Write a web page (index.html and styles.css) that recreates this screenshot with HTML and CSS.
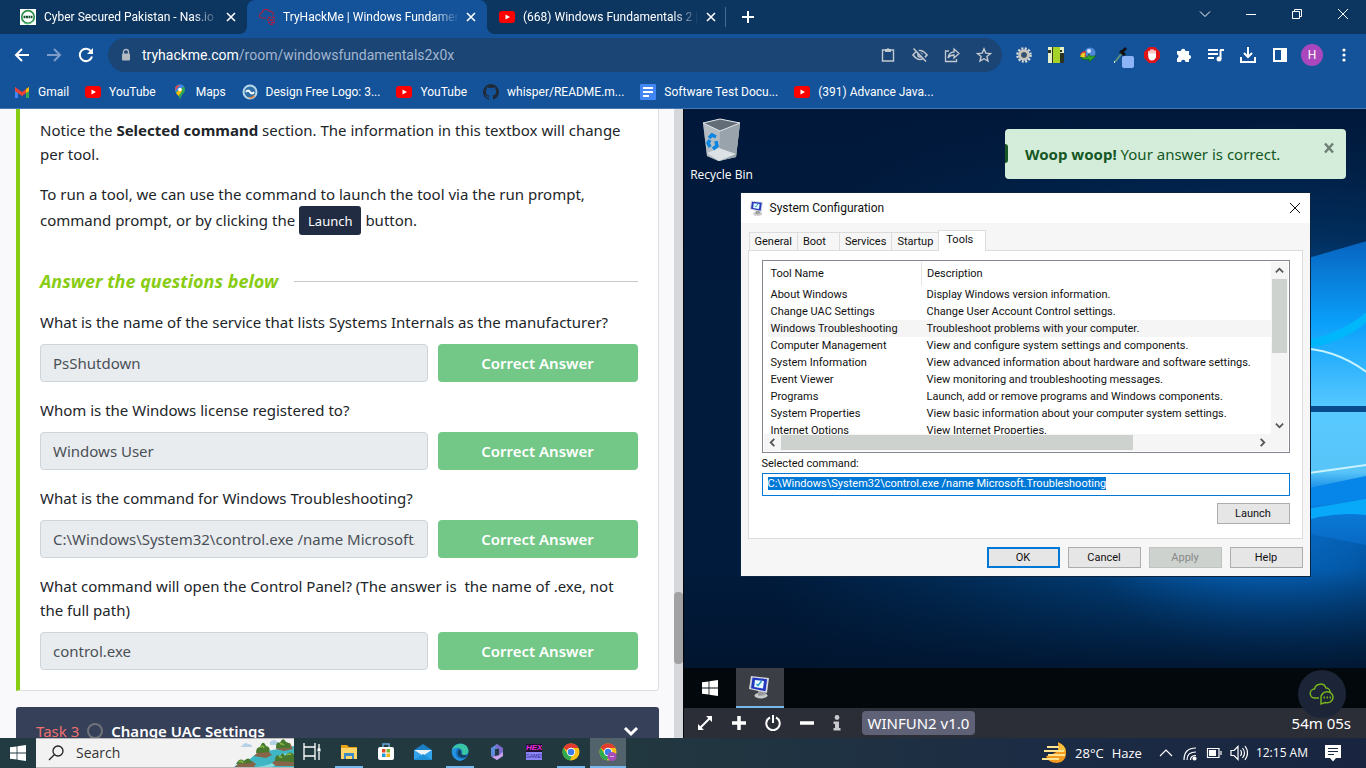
FILE: index.html
```html
<!DOCTYPE html>
<html lang="en">
<head>
<meta charset="utf-8">
<title>TryHackMe | Windows Fundamentals 2</title>
<link rel="stylesheet" href="styles.css">
</head>
<body>
<svg class="defs" aria-hidden="true">
  <symbol id="youtube" viewBox="0 0 16 16"><rect y="2" width="16" height="12" rx="3" fill="#f00"/><path d="M6.5 5.4v5.2L11 8z" fill="#fff"/></symbol>
  <symbol id="close" viewBox="0 0 16 16"><path d="M4 4l8 8M12 4l-8 8" stroke="currentColor" stroke-width="1.6" fill="none"/></symbol>
  <symbol id="windows" viewBox="0 0 16 16"><path d="M0 2.3l6.6-.9v6.2H0zM7.4 1.3L16 0v7.6H7.4zM0 8.4h6.6v6.2L0 13.7zM7.4 8.4H16V16l-8.6-1.3z" fill="#fff"/></symbol>
  <symbol id="msconfig" viewBox="0 0 24 24"><ellipse cx="13" cy="20.5" rx="6.500" ry="3" fill="#c9c9c9"/><path d="M10 15l6 1 1 4-7 1z" fill="#999"/><path d="M3 1l18 2-2 15L1 14z" fill="#d7d7df"/><path d="M4.500 2.500l14.600 1.700-1.600 12L3 13.200z" fill="#2239bd"/><path d="M7 5l9 1-1 7.500-8.800-1.600z" fill="#e8fbff"/><path d="M8.500 9l1.600 1.500L13.500 6" stroke="#1b93c9" stroke-width="1.400" fill="none"/></symbol>
  <symbol id="chrome" viewBox="0 0 18 18"><circle cx="9" cy="9" r="8.500" fill="#fbc116"/><path d="M1.600 4.800A8.500 8.500 0 0 1 16.400 4.900H9a4 4 0 0 0-3.700 2.600z" fill="#e33b2e"/><path d="M1.600 4.800L5.500 11a4 4 0 0 0 4.400 2L7.800 17.400A8.500 8.500 0 0 1 1.600 4.800z" fill="#2da94f"/><circle cx="9" cy="9" r="4.200" fill="#fff"/><circle cx="9" cy="9" r="3.300" fill="#3b7de9"/></symbol>
</svg>

<header class="browser">
  <div class="tabstrip">
    <div class="tab">
      <svg class="ic16" viewBox="0 0 16 16"><rect width="16" height="16" fill="#fff"/><circle cx="8" cy="8" r="6.300" fill="none" stroke="#2f8f4a" stroke-width="1.700"/><path d="M3.500 8h9" stroke="#15512d" stroke-width="2.500" stroke-dasharray="2 .5"/><path d="M4 14a7 7 0 0 0 9-2" stroke="#69c27f" fill="none"/></svg>
      <span class="tab-title">Cyber Secured Pakistan - Nas.io Member</span>
      <button class="tab-close" aria-label="Close tab"><svg class="ic16"><use href="#close"/></svg></button>
    </div>
    <div class="tab active">
      <svg class="ic16" viewBox="0 0 16 16" fill="none" stroke="#a92142" stroke-width="1.100"><path d="M7 9H3a2.400 2.400 0 0 1 0-5 4 4 0 0 1 7.500-1.500A3 3 0 0 1 14 6.500"/><path d="M9 8.500h3M13 8.500h3M8 11h2M11 11h3M15 11h1M9 13.500h2M12 13.500h4M11 15.500h3" stroke-width="1.400"/></svg>
      <span class="tab-title">TryHackMe | Windows Fundamentals 2</span>
      <button class="tab-close" aria-label="Close tab"><svg class="ic16"><use href="#close"/></svg></button>
    </div>
    <div class="tab last">
      <svg class="ic16"><use href="#youtube"/></svg>
      <span class="tab-title">(668) Windows Fundamentals 2 | TryHackMe</span>
      <button class="tab-close" aria-label="Close tab"><svg class="ic16"><use href="#close"/></svg></button>
    </div>
    <button class="new-tab" aria-label="New tab"><svg class="ic16" viewBox="0 0 16 16"><path d="M8 2v12M2 8h12" stroke="#fff" stroke-width="2"/></svg></button>
    <div class="win-controls">
      <button aria-label="Search tabs"><svg class="ic12" viewBox="0 0 12 12"><path d="M1 3.500l5 5 5-5"/></svg></button>
      <button aria-label="Minimize"><svg class="ic12" viewBox="0 0 12 12"><path d="M1 6.500h10"/></svg></button>
      <button aria-label="Restore"><svg class="ic12" viewBox="0 0 12 12"><path d="M1.500 3.500h7v7h-7zM3.500 3.500v-2h7v7h-2"/></svg></button>
      <button aria-label="Close"><svg class="ic12" viewBox="0 0 12 12"><path d="M1 1l10 10M11 1L1 11"/></svg></button>
    </div>
  </div>

  <div class="toolbar">
    <button class="tool" aria-label="Back"><svg class="ic16" viewBox="0 0 16 16"><path d="M15 8H2M8 2L2 8l6 6" fill="none" stroke="#fff" stroke-width="2"/></svg></button>
    <button class="tool" aria-label="Forward"><svg class="ic16" viewBox="0 0 16 16"><path d="M1 8h13M8 2l6 6-6 6" fill="none" stroke="#7d9cc9" stroke-width="2"/></svg></button>
    <button class="tool" aria-label="Reload"><svg class="ic16" viewBox="0 0 16 16"><path d="M13.200 4.500A6.200 6.200 0 1 0 14 9.500" fill="none" stroke="#fff" stroke-width="2"/><path d="M15 1v6H9z" fill="#fff"/></svg></button>
    <div class="omnibox">
      <svg class="lock" viewBox="0 0 10 14"><path d="M2.500 6V4a2.500 2.500 0 0 1 5 0v2" fill="none" stroke="#b5b9c2" stroke-width="1.400"/><rect x="1" y="5.500" width="8" height="7" rx="1" fill="#b5b9c2"/></svg>
      <span class="url"><b>tryhackme.com</b>/room/windowsfundamentals2x0x</span>
      <button class="tool" aria-label="Clipboard"><svg class="ic16" viewBox="0 0 16 16"><path d="M2.500 3h11v11h-11z" fill="none" stroke="#c4c8cf" stroke-width="1.400"/><path d="M5 2h2l1-1.500L9 2h2v3H5z" fill="#c4c8cf"/></svg></button>
      <button class="tool" aria-label="Tracking blocked"><svg class="ic16" viewBox="0 0 16 16" fill="none" stroke="#c4c8cf"><path d="M1 8q7-9 14 0-7 9-14 0z" stroke-width="1.600"/><circle cx="8" cy="8" r="2" stroke-width="1.600"/><path d="M3 1l12 13" stroke="#1a4577" stroke-width="2"/><path d="M1.500 1.500l12.500 13" stroke-width="1.500"/></svg></button>
      <button class="tool" aria-label="Share"><svg class="ic16" viewBox="0 0 16 16" fill="none" stroke="#c4c8cf" stroke-width="1.300"><path d="M5 4H1.500v10.500h11V12"/><path d="M4 11q1-6 6-6V2l5 4.500-5 4.500V8Q6 8 4 11z"/></svg></button>
      <button class="tool" aria-label="Bookmark"><svg class="ic16" viewBox="0 0 16 16"><path d="M8 1.800l1.800 4.300 4.700.4-3.600 3 1.100 4.600L8 11.700l-4 2.400 1.100-4.600-3.600-3 4.700-.4z" fill="none" stroke="#c4c8cf" stroke-width="1.400"/></svg></button>
    </div>
    <button class="tool" aria-label="Settings extension"><svg class="ic16" viewBox="0 0 16 16"><circle cx="8" cy="8" r="6.500" fill="none" stroke="#d8d8d4" stroke-width="2.600" stroke-dasharray="2 1.400"/><circle cx="8" cy="8" r="4.300" fill="#26527f" stroke="#c4c4c1" stroke-width="3"/><circle cx="8" cy="8" r="2.400" fill="none" stroke="#555"/></svg></button>
    <button class="tool" aria-label="Door extension"><svg class="ic16" viewBox="0 0 16 16"><path fill="#e4efc8" d="M0 0h16v16H0z"/><path fill="#a5d328" d="M5 0h7v16H5z"/><path fill="#2d3322" d="M0 3h3v3H0zM12 3h2v2h-2zM12 6h4v10h-4zM4 0h1v16H4z"/></svg></button>
    <button class="tool" aria-label="Download manager"><svg class="ic16" viewBox="0 0 16 16"><circle cx="10" cy="6" r="5.500" fill="#4e88d6"/><circle cx="9" cy="4" r="2" fill="#d5e6ff"/><path d="M0 8q1-4 6-4-1 4 1 6z" fill="#d53f2f"/><path d="M0 10q2-5 5-4-1 3 1 5z" fill="#e6d324"/><path d="M0 10q7 3 9-3v2h7l-7 6v-3q-6 2-9-2z" fill="#30a627" stroke="#0b5714" stroke-width=".5"/></svg></button>
    <button class="tool" aria-label="Colour picker"><svg class="picker" viewBox="0 0 22 22"><path d="M3 16L10 7" stroke="#5b927c" stroke-width="2"/><path d="M8 5l5 4M10 6l4-4" stroke="#111" stroke-width="3"/><path d="M2.500 17v-2" stroke="#dcefe5"/><rect x="10" y="10" width="12" height="12" rx="2" fill="#8eb4f8"/></svg></button>
    <button class="tool" aria-label="Ad blocker"><svg class="ic16" viewBox="0 0 16 16"><path d="M5 0h6l5 5v6l-5 5H5l-5-5V5z" fill="#e01317"/><path d="M5 8V4.500M7 7V3M9 7V3M11 8V4" stroke="#fff" stroke-width="1.500" stroke-linecap="round"/><path d="M4.300 6.500H12v4Q10.500 13.500 8 13.500 5 13.500 4.300 10z" fill="#fff"/></svg></button>
    <button class="tool" aria-label="Extensions"><svg class="ic16" viewBox="0 0 16 16"><path d="M1 4h4a2.200 2.200 0 1 1 4.400 0H13v4a2.100 2.100 0 1 1 0 4.200V15H9.500a2.200 2.200 0 0 0-4.400 0H1v-3.600a2.200 2.200 0 0 0 0-4.200z" fill="#fff"/></svg></button>
    <button class="tool" aria-label="Media"><svg class="ic16" viewBox="0 0 16 16"><path d="M0 3h10M0 7h10M0 11h6M12.500 3v9M12 3h4" stroke="#fff" stroke-width="2"/><circle cx="11" cy="12" r="2.500" fill="#fff"/></svg></button>
    <button class="tool" aria-label="Downloads"><svg class="ic16" viewBox="0 0 16 16"><path d="M8 0v9M4 6l4 4 4-4M1 10v5h14v-5" fill="none" stroke="#fff" stroke-width="2"/></svg></button>
    <button class="tool" aria-label="Side panel"><svg class="ic16" viewBox="0 0 16 16"><path d="M1 1h14v14H1zM3 3v10h6V3z" fill="#fff" fill-rule="evenodd"/></svg></button>
    <button class="tool" aria-label="Profile"><span class="avatar">H</span></button>
    <button class="tool" aria-label="Menu"><svg class="ic16" viewBox="0 0 16 16" fill="#fff"><circle cx="8" cy="3" r="1.600"/><circle cx="8" cy="8" r="1.600"/><circle cx="8" cy="13" r="1.600"/></svg></button>
  </div>

  <nav class="bookmarks">
    <a href="#"><svg class="ic16" viewBox="0 0 16 16"><path d="M1 3v11h3V6z" fill="#4285f4"/><path d="M15 3v11h-3V6z" fill="#34a853"/><path d="M1 3l7 5 7-5v4l-7 5-7-5z" fill="#ea4335"/><path d="M12 5l3-2v4l-3 2z" fill="#fbbc04"/></svg>Gmail</a>
    <a href="#"><svg class="ic16"><use href="#youtube"/></svg>YouTube</a>
    <a href="#"><svg class="ic16" viewBox="0 0 16 16"><path d="M8 .5a5 5 0 0 1 5 5C13 9 9.500 10 8 15.500 6.500 10 3 9 3 5.500a5 5 0 0 1 5-5z" fill="#34a853"/><path d="M3.500 8L12 2.500A5 5 0 0 0 3 5.500z" fill="#4285f4"/><path d="M3.200 6.500L8 1 4.500 1.800A5 5 0 0 0 3.200 6.500z" fill="#ea4335"/><path d="M4 9l4-4 2 2-3.500 5z" fill="#fbbc04"/><circle cx="8" cy="5.500" r="1.800" fill="#fff"/></svg>Maps</a>
    <a href="#"><svg class="ic16" viewBox="0 0 16 16"><circle cx="8" cy="8" r="7.500" fill="#b9d9ea"/><circle cx="8" cy="8" r="5.500" fill="#2d6da8"/><path d="M4 8q2-3 4 0t4 0" stroke="#fff" stroke-width="2" fill="none"/><path d="M5 13q5 1 7-2l1 2-4 2z" fill="#e08a48"/></svg>Design Free Logo: 3...</a>
    <a href="#"><svg class="ic16"><use href="#youtube"/></svg>YouTube</a>
    <a href="#"><svg class="ic16" viewBox="0 0 16 16"><path d="M8 0a8 8 0 0 0-2.500 15.600c.4 0 .5-.2.500-.4v-1.500c-2.200.5-2.700-1-2.700-1-.4-.9-.9-1.200-.9-1.200-.7-.5.1-.5.1-.5.800.1 1.200.8 1.200.8.700 1.200 1.900.9 2.300.7 0-.5.300-.9.500-1.100-1.800-.2-3.600-.9-3.600-4 0-.9.300-1.600.8-2.100 0-.2-.3-1 .1-2.100 0 0 .7-.2 2.200.8a7.500 7.500 0 0 1 4 0c1.500-1 2.200-.8 2.200-.8.400 1.100.2 1.900.1 2.100.5.500.8 1.300.8 2.100 0 3.100-1.900 3.800-3.700 4 .3.300.6.700.6 1.500v2.300c0 .2.100.5.500.4A8 8 0 0 0 8 0z" fill="#202a36"/></svg>whisper/README.m...</a>
    <a href="#"><svg class="ic16" viewBox="0 0 16 16"><rect width="16" height="16" rx="1" fill="#4285f4"/><path d="M3 4h10M3 8h10M3 12h6" stroke="#fff" stroke-width="2"/></svg>Software Test Docu...</a>
    <a href="#"><svg class="ic16"><use href="#youtube"/></svg>(391) Advance Java...</a>
  </nav>
</header>

<div class="content">
  <div class="page">
    <main class="room">
      <section class="task-card">
        <p>Notice the <strong>Selected command</strong> section. The information in this textbox will change per tool.</p>
        <p>To run a tool, we can use the command to launch the tool via the run prompt, command prompt, or by clicking the <span class="key">Launch</span> button.</p>
        <h2>Answer the questions below</h2>
        <form class="questions">
          <label for="q1">What is the name of the service that lists Systems Internals as the manufacturer?</label>
          <div class="answer"><input id="q1" value="PsShutdown" readonly><button type="button">Correct Answer</button></div>
          <label for="q2">Whom is the Windows license registered to?</label>
          <div class="answer"><input id="q2" value="Windows User" readonly><button type="button">Correct Answer</button></div>
          <label for="q3">What is the command for Windows Troubleshooting?</label>
          <div class="answer"><input id="q3" value="C:\Windows\System32\control.exe /name Microsoft.Troubleshooting" readonly><button type="button">Correct Answer</button></div>
          <label for="q4">What command will open the Control Panel? (The answer is&nbsp; the name of .exe, not the full path)</label>
          <div class="answer"><input id="q4" value="control.exe" readonly><button type="button">Correct Answer</button></div>
        </form>
      </section>
      <button class="task-head"><span class="task-no">Task 3</span><span class="ring"></span><span class="task-name">Change UAC Settings</span><svg class="ic16" viewBox="0 0 16 16"><path d="M2 5l6 6 6-6" fill="none" stroke="#fff" stroke-width="3"/></svg></button>
    </main>
    <div class="page-scroll"><div class="page-thumb"></div></div>
  </div>

  <section class="machine">
    <div class="desktop">
      <svg class="wallpaper" viewBox="0 0 682 559" preserveAspectRatio="none" aria-hidden="true">
        <defs>
          <radialGradient id="glow" gradientUnits="userSpaceOnUse" cx="590" cy="340" r="520"><stop offset="0" stop-color="#0a7ee0"/><stop offset=".25" stop-color="#045cae"/><stop offset=".42" stop-color="#013c74"/><stop offset=".7" stop-color="#012a54"/><stop offset="1" stop-color="#011b3c"/></radialGradient>
          <linearGradient id="top" x1="0" y1="0" x2="0" y2="1"><stop offset="0" stop-color="#01183a"/><stop offset="1" stop-color="#01183a" stop-opacity="0"/></linearGradient>
          <linearGradient id="base" x1="0" y1="0" x2="0" y2="1"><stop offset="0" stop-color="#01142d" stop-opacity="0"/><stop offset="1" stop-color="#01142d" stop-opacity=".9"/></linearGradient>
          <linearGradient id="pane1" x1="0" y1="0" x2="0" y2="1"><stop offset="0" stop-color="#0764bf"/><stop offset=".5" stop-color="#0aa0fb"/><stop offset="1" stop-color="#55c8ff"/></linearGradient>
          <linearGradient id="pane2" x1="0" y1="0" x2="0" y2="1"><stop offset="0" stop-color="#58caff"/><stop offset=".45" stop-color="#58c4f8"/><stop offset=".6" stop-color="#0c84e4"/><stop offset="1" stop-color="#0869c4"/></linearGradient>
        </defs>
        <rect width="682" height="559" fill="url(#glow)"/>
        <rect width="682" height="210" fill="url(#top)"/>
        <rect y="460" width="682" height="99" fill="url(#base)"/>
        <path d="M600 156L682 132v165h-82z" fill="url(#pane1)"/>
        <path d="M600 303h82v133l-82-16z" fill="url(#pane2)"/>
        <path d="M600 297h82v6h-82z" fill="#084c8d"/>
        <path d="M600 235q50-5 82-32v10q-30 27-82 28z" fill="#00b7fb"/>
        <path d="M610 239q40 0 72 24M610 366l72-10" stroke="#c8f3ff" stroke-width="2" fill="none"/>
        <path d="M610 382l72-15v24l-72 8z" fill="#0786e9"/>
        <path d="M610 402l72-12v16q-40-4-72 10z" fill="#08a9f8"/>
      </svg>
      <a class="recycle" href="#">
        <svg viewBox="0 0 40 44"><path d="M1 5l17-4 20 4-4 34-18 4-11-5z" fill="#8c959e"/><path d="M1 5l17 8 20-8-4 34-17 4-12-5z" fill="#bdc5cc" opacity=".8"/><path d="M18 13l20-8-4 34-17 4z" fill="#99a3ac"/><path d="M1 5l17-4 20 4-20 8z" fill="#626d78" stroke="#e1e7eb"/><path d="M5 35l12-5 17 6-17 7z" fill="#dce1e5"/><path d="M7 20l3-3 4 2M14 23l1 5-4 3M8 29l-2-4 2-3" fill="none" stroke="#0a86e2" stroke-width="3.500"/></svg>
        <span>Recycle Bin</span>
      </a>

      <div class="alert" role="status"><span><strong>Woop woop!</strong> Your answer is correct.</span><button aria-label="Dismiss"><svg class="ic16" viewBox="0 0 16 16"><path d="M4 3.500l8 9M12 3.500l-8 9" stroke="#6f8075" stroke-width="2.500"/></svg></button></div>

      <div class="dialog" role="dialog" aria-label="System Configuration">
        <div class="title"><svg class="ic16"><use href="#msconfig"/></svg><span>System Configuration</span><button aria-label="Close"><svg class="ic12" viewBox="0 0 12 12"><path d="M1 1l10 10M11 1L1 11" stroke="#111"/></svg></button></div>
        <div class="sheet">
          <div class="tabs" role="tablist">
            <button role="tab">General</button><button role="tab">Boot</button><button role="tab">Services</button><button role="tab">Startup</button><button role="tab" class="on" aria-selected="true">Tools</button>
          </div>
          <div class="pane">
            <div class="list">
              <div class="rows">
                <table>
                  <thead><tr><th>Tool Name</th><th>Description</th></tr></thead>
                  <tbody>
                    <tr><td>About Windows</td><td>Display Windows version information.</td></tr>
                    <tr><td>Change UAC Settings</td><td>Change User Account Control settings.</td></tr>
                    <tr class="picked"><td>Windows Troubleshooting</td><td>Troubleshoot problems with your computer.</td></tr>
                    <tr><td>Computer Management</td><td>View and configure system settings and components.</td></tr>
                    <tr><td>System Information</td><td>View advanced information about hardware and software settings.</td></tr>
                    <tr><td>Event Viewer</td><td>View monitoring and troubleshooting messages.</td></tr>
                    <tr><td>Programs</td><td>Launch, add or remove programs and Windows components.</td></tr>
                    <tr><td>System Properties</td><td>View basic information about your computer system settings.</td></tr>
                    <tr><td>Internet Options</td><td>View Internet Properties.</td></tr>
                  </tbody>
                </table>
              </div>
              <div class="vbar"><svg class="arrow" viewBox="0 0 10 10"><path d="M1 7l4-4 4 4"/></svg><div class="vthumb"></div><svg class="arrow" viewBox="0 0 10 10"><path d="M1 3l4 4 4-4"/></svg></div>
              <div class="hbar"><svg class="arrow" viewBox="0 0 10 10"><path d="M7 1L3 5l4 4"/></svg><div class="hthumb"></div><svg class="arrow" viewBox="0 0 10 10"><path d="M3 1l4 4-4 4"/></svg></div>
            </div>
            <label for="cmd">Selected command:</label>
            <input id="cmd" value="C:\Windows\System32\control.exe /name Microsoft.Troubleshooting" readonly>
            <button class="btn launch">Launch</button>
          </div>
          <div class="actions"><button class="btn ok">OK</button><button class="btn">Cancel</button><button class="btn" disabled>Apply</button><button class="btn">Help</button></div>
        </div>
      </div>
    </div>

    <div class="vm-taskbar">
      <button aria-label="Start"><svg class="ic16"><use href="#windows"/></svg></button>
      <button class="open" aria-label="System Configuration"><svg class="ic24"><use href="#msconfig"/></svg></button>
    </div>
    <div class="vm-tools">
      <button aria-label="Full screen"><svg class="ic16" viewBox="0 0 16 16"><path d="M3.500 12.500l9-9" stroke="#fff" stroke-width="2"/><path d="M9 1h6v6zM1 9v6h6z" fill="#fff"/></svg></button>
      <button aria-label="Add time"><svg class="ic16" viewBox="0 0 16 16"><path d="M8 1v14M1 8h14" stroke="#fff" stroke-width="3.500"/></svg></button>
      <button aria-label="Power"><svg class="ic16" viewBox="0 0 16 16"><path d="M5 2.500a6.700 6.700 0 1 0 6 0M8 0v8" fill="none" stroke="#fff" stroke-width="2"/></svg></button>
      <button aria-label="Remove"><svg class="ic16" viewBox="0 0 16 16"><path d="M1 8h14" stroke="#fff" stroke-width="3.500"/></svg></button>
      <button class="narrow" aria-label="Information"><svg class="ic16" viewBox="0 0 16 16" fill="#c9cace"><circle cx="8" cy="2.500" r="2.400"/><path d="M4.500 6.500H10V13h1.500v2.500h-7V13H6V9H4.500z"/></svg></button>
      <span class="vm-name">WINFUN2 v1.0</span>
      <span class="timer">54m 05s</span>
    </div>
    <button class="chat" aria-label="Chat"><svg viewBox="0 0 26 24" fill="none" stroke="#77b31d" stroke-width="1.500"><path d="M10 16H6a4.500 4.500 0 0 1-.5-9 6 6 0 0 1 11.500-1 4 4 0 0 1 4 4"/><path d="M12 22v-6.500a6 5.500 0 1 1 4 5z"/><path d="M14.500 15.500h1.500M17.500 15.500H19M20.500 15.500H22" stroke-width="2"/></svg></button>
  </section>
</div>

<footer class="taskbar">
  <button class="start" aria-label="Start"><svg class="ic16"><use href="#windows"/></svg></button>
  <div class="search">
    <svg class="ic16" viewBox="0 0 16 16"><circle cx="10" cy="6" r="5" fill="none" stroke="#222" stroke-width="1.300"/><path d="M6.500 9.500L1 15" stroke="#222" stroke-width="1.300"/></svg>
    <input aria-label="Search" placeholder="Search">
    <svg class="island" viewBox="0 0 60 28"><path d="M0 28Q4 23 16 20 20 15 28 13l32-6v21z" fill="#3fb6c4"/><path d="M22 28q18-2 20-8t18-6v3q-12 2-14 5t-8 6z" fill="#83dbe0"/><path d="M8 7q3-5 6-2 4 0 4 3H6zM36 3q5-4 7 0h3l-1 3h-9z" fill="#b5d1e5"/><path d="M1 28l4-4 13-2 4 3-2 3zM20 17l4-4 10-1 4 4-6 3zM42 10l2-5 12-1 3 6-9 2zM38 24l5-4 17-1v8H42z" fill="#876548"/><path d="M2 25q4-7 8-3 5-6 8 2zM22 14q0-6 4-6 3-8 6-1 5 1 3 6zM42 9q0-7 4-5 3-7 6-1 5 1 4 6zM41 22q0-8 5-5 3-5 5 0 4-6 9-2v8z" fill="#47792f"/><path d="M5 23q3-2 4 1M26 8q3-2 4 1M46 5q2-1 4 1M45 18q2-1 3 1M53 16q3-2 4 0" stroke="#8bb742" fill="none" stroke-width="1.500"/></svg>
  </div>
  <div class="apps">
    <button aria-label="Task view"><svg class="ic18" viewBox="0 0 18 18" fill="none" stroke="#fff" stroke-width="1.300"><path d="M1 4h11v9H1zM1 0v4M12 0v4M1 13v4M12 13v4M16 1v5M16 9v8"/><path d="M14.500 7h3" stroke-width="3"/></svg></button>
    <button class="run" aria-label="File Explorer"><svg class="ic18" viewBox="0 0 18 18"><path d="M1 2h6l2 2h8v12H1z" fill="#e8a317"/><path d="M1 5h16v11H1z" fill="#ffd667"/><path d="M4 10h10v6h-2v-3H6v3H4z" fill="#3d8ac8"/></svg></button>
    <button aria-label="Microsoft Store"><svg class="ic18" viewBox="0 0 18 18"><path d="M6 5V1h6v4" fill="none" stroke="#69a7d6" stroke-width="1.500"/><rect x="1" y="4" width="16" height="13" rx="2" fill="#fff"/><path fill="#e84b2b" d="M5 6h3.500v3.500H5z"/><path fill="#79b530" d="M9.500 6H13v3.500H9.500z"/><path fill="#1f9bde" d="M5 10.500h3.500V14H5z"/><path fill="#f6b317" d="M9.500 10.500H13V14H9.500z"/></svg></button>
    <button aria-label="Mail"><svg class="ic18" viewBox="0 0 18 18"><path d="M0 7l9-6 9 6v9H0z" fill="#1c7fc4"/><path d="M0 7h18l-9 6z" fill="#e8f3fa"/><path d="M0 7l9 6-9 4zM18 7l-9 6 9 4z" fill="#33a4eb"/><path d="M0 17l9-6 9 6z" fill="#1e90d8"/></svg></button>
    <button class="run" aria-label="Edge"><svg class="ic18" viewBox="0 0 18 18"><circle cx="9" cy="9" r="8.500" fill="#1572c4"/><path d="M.8 8C2-1 17-2 17.500 8c0 4-5 5-7 3 2-3-1-6-4-6-3 0-5 1-5.700 3z" fill="#39c4a3"/><path d="M1 8Q3 4 7 5q-4 4-1 9 3 3 9 1-7 6-12-.5Q1 12 1 8z" fill="#2493e0"/><path d="M10 11q1-3-2-5-3 6 1 8 4 2 8-2-4 1-7-1z" fill="#173f60"/></svg></button>
    <button aria-label="Microsoft 365"><svg class="ic18" viewBox="0 0 18 18"><path d="M9 1L3 5v8l4 2V7l5-3z" fill="#5e8bdb"/><path d="M9 1l6 4v8l-6 4-6-4 6-1 2-2V6L7 4z" fill="#7d6bcb"/><path d="M15 9v4l-6 4-5-3 7-2z" fill="#c7a3e9"/><path d="M7 6l4 0v6l-4 1z" fill="#233746"/></svg></button>
    <button aria-label="Hex Games"><span class="hex"><b>HEX</b><small>GAMES</small></span></button>
    <button class="run" aria-label="Chrome"><svg class="ic18"><use href="#chrome"/></svg></button>
    <button class="run current" aria-label="Chrome, profile H"><svg class="ic18" viewBox="0 0 18 18"><use href="#chrome"/><circle cx="13" cy="13.500" r="4.500" fill="#a44db9"/><path d="M11 13.500h4" stroke="#d9b3e2"/></svg></button>
  </div>
  <div class="tray">
    <svg class="haze" viewBox="0 0 25 22"><path d="M16 0q9 4 8 11a9 9 0 0 1-9 10q-9 0-11-7 9-2 12-6z" fill="#f29a1f"/><path d="M16 1q3 4 0 7l7 2q1-7-7-9z" fill="#f9c13c"/><path d="M5 5h12M2 9h20M6 13h17M0 17h17" stroke="#ffe391" stroke-width="2"/></svg>
    <span class="weather">28°C</span><span class="weather">Haze</span>
    <svg class="ic16 caret" viewBox="0 0 16 16"><path d="M2 11l6-6 6 6"/></svg>
    <svg class="ic16" viewBox="0 0 16 16"><path d="M2 15Q2 3 14 3M5 15q0-8 9-8M8.500 15q0-4.500 5.500-4.500"/><circle cx="12.500" cy="13.500" r="1.500" fill="#fff"/></svg>
    <svg class="ic16" viewBox="0 0 16 16"><path d="M1.500 3.500h11.500v9H1.500zM15 6v4"/><path d="M3 5h7v6H3z" fill="#fff" stroke="none"/></svg>
    <svg class="ic18" viewBox="0 0 18 18"><path d="M1 6.500h3l4-4v13l-4-4H1zM10.500 6q2 3 0 6M12.500 4q4 5 0 10M15 2q5 7 0 14"/></svg>
    <span class="clock">12:15 AM</span>
    <svg class="ic18 note" viewBox="0 0 18 18"><path d="M1 1h16v13h-5l-3 3.500L6 14H1z" fill="#fff" stroke="none"/><path d="M4 4.500h10M4 7.500h10M4 10.500h6" stroke="#1c2b42"/></svg>
  </div>
</footer>
<script>
  document.getElementById('cmd').select();
</script>
</body>
</html>
```

FILE: styles.css
```css
* { box-sizing: border-box; }
body {
  margin: 0;
  height: 100vh;
  display: flex;
  flex-direction: column;
  overflow: hidden;
  font: 12px/16px "Open Sans", "Noto Sans", sans-serif;
  color: #fff;
}
button {
  font: inherit;
  color: inherit;
  background: none;
  border: 0;
  padding: 0;
  margin: 0;
}
input { font: inherit; margin: 0; min-width: 0; }
a { color: inherit; text-decoration: none; }
svg { display: block; flex: none; }
.defs { position: absolute; width: 0; height: 0; }
.ic12 { width: 12px; height: 12px; fill: none; stroke: #fff; }
.ic16 { width: 16px; height: 16px; }
.ic18 { width: 18px; height: 18px; }
.ic24 { width: 24px; height: 24px; }

/* Browser chrome */
.browser { flex: none; background: #14539a; border-bottom: 1px solid #4377b4; font-family: Roboto, sans-serif; }
.tabstrip { display: flex; height: 34px; background: #0c3560; }
.tab {
  position: relative;
  flex: none;
  width: 240px;
  display: flex;
  align-items: center;
  padding: 0 8px 0 12px;
}
.tab:first-child { width: 247px; padding-left: 20px; }
.tab.active { background: #14539a; border-radius: 8px 8px 0 0; }
.tab.active::before, .tab.active::after {
  content: "";
  position: absolute;
  bottom: 0;
  width: 8px;
  height: 8px;
}
.tab.active::before { right: 100%; background: radial-gradient(circle at 0 0, transparent 8px, #14539a 8px); }
.tab.active::after { left: 100%; background: radial-gradient(circle at 100% 0, transparent 8px, #14539a 8px); }
.tab.last::after { content: ""; position: absolute; right: 1px; top: 7px; height: 20px; width: 1px; background: #486a92; }
.tab-title {
  flex: 1;
  min-width: 0;
  margin: 0 4px 0 8px;
  overflow: hidden;
  white-space: nowrap;
  mask-image: linear-gradient(to right, #000 85%, transparent);
}
.new-tab { width: 42px; display: flex; justify-content: center; align-items: center; }
.win-controls { margin-left: auto; display: flex; }
.win-controls button { width: 46px; height: 28px; display: flex; align-items: center; justify-content: center; }
.toolbar { display: flex; align-items: center; height: 42px; padding: 0 6px; }
.tool { flex: none; width: 32px; height: 32px; display: flex; align-items: center; justify-content: center; }
.omnibox {
  flex: 1;
  height: 34px;
  display: flex;
  align-items: center;
  margin: 0 6px;
  padding: 0 2px 0 13px;
  border-radius: 17px;
  background: #1a4575;
}
.lock { width: 10px; height: 14px; margin-right: 11px; }
.url { flex: 1; font-size: 14px; line-height: 20px; color: #a3b6cf; }
.url b { font-weight: 400; color: #fff; }
.picker { width: 22px; height: 22px; margin: 4px 0 0 6px; }
.avatar { width: 22px; height: 22px; border-radius: 50%; background: #ab47bc; line-height: 22px; text-align: center; }
.bookmarks { display: flex; gap: 16px; height: 32px; padding: 0 14px; align-items: center; }
.bookmarks a { display: flex; align-items: center; gap: 8px; white-space: nowrap; }

/* Room page */
.content { flex: 1; min-height: 0; display: flex; }
.page { flex: 1; min-width: 0; display: flex; }
.room {
  flex: 1;
  min-width: 0;
  overflow: hidden;
  padding: 0 15px 0 16px;
  background: #f9f9fb;
  color: #212529;
  font: 15px/24px "Noto Sans", "Open Sans", sans-serif;
}
.task-card {
  padding: 9px 20px 20px;
  background: #fff;
  border: solid #dcdee2;
  border-width: 0 1px 1px 0;
  border-left: 4px solid #88cc14;
  border-radius: 0 0 4px 0;
}
.task-card p { margin: 0 0 16px; }
.key {
  display: inline-block;
  padding: 4px 9px 3px;
  border-radius: 3px;
  background: #212c42;
  color: #fff;
  font-size: 13px;
  line-height: 22px;
}
h2 {
  display: flex;
  align-items: center;
  gap: 16px;
  margin: 34px 0 17px;
  color: #88cc14;
  font-size: 18px;
  line-height: 24px;
  font-style: italic;
}
h2::after { content: ""; flex: 1; height: 1px; background: #c8c8c8; }
.questions label { display: block; margin-bottom: 10px; }
.answer { display: flex; gap: 10px; margin-bottom: 16px; }
.answer:last-child { margin-bottom: 0; }
.answer input {
  flex: 1;
  height: 38px;
  padding: 0 12px;
  border: 1px solid #ced4da;
  border-radius: 4px;
  background: #e9ecef;
  color: #495057;
}
.answer button { width: 200px; border-radius: 4px; background: #73c787; color: #fff; font-weight: 600; }
.task-head {
  width: 100%;
  display: flex;
  align-items: center;
  margin-top: 16px;
  padding: 12px 20px;
  border-radius: 3px 3px 0 0;
  background: #364058;
}
.task-no { color: #f0706f; }
.ring { width: 16px; height: 16px; margin: 0 8px; border: 2px solid #6f7278; border-radius: 50%; }
.task-name { color: #fff; font-weight: 600; margin-right: auto; }
.page-scroll { flex: none; width: 9px; background: #d6d7da; padding-top: 483px; }
.page-thumb { height: 72px; background: #a2a2a4; border-radius: 4px; }

/* Remote machine */
.machine { position: relative; flex: 1; min-width: 0; display: flex; flex-direction: column; border-left: 1px solid #04070c; }
.desktop { position: relative; flex: 1; min-height: 0; overflow: hidden; background: #01152f; }
.wallpaper { position: absolute; width: 100%; height: 100%; }
.recycle { position: absolute; left: 0; top: 9px; width: 76px; font-size: 12px; text-align: center; }
.recycle svg { width: 40px; height: 44px; margin: 0 auto 5px; }
.alert {
  position: absolute;
  right: 20px;
  top: 20px;
  width: 341px;
  height: 50px;
  padding: 0 9px 0 20px;
  display: flex;
  align-items: center;
  justify-content: space-between;
  border-radius: 4px;
  background: #d4edda;
  color: #155724;
  font: 15px/24px "Noto Sans", sans-serif;
}
.alert::before { content: ""; position: absolute; left: 0; top: 15px; width: 3px; height: 19px; border-radius: 0 3px 3px 0; background: #155724; }
.alert button { align-self: flex-start; margin-top: 11px; }
.dialog {
  position: absolute;
  left: 57px;
  top: 84px;
  width: 569px;
  background: #f6f6f6;
  color: #111;
  font-family: Roboto, sans-serif;
  font-size: 11px;
  box-shadow: 0 0 0 1px #0c2440;
}
.title { display: flex; align-items: center; gap: 5px; height: 30px; padding: 0 9px 1px 8px; background: #fff; font-size: 12px; }
.title button { margin-left: auto; }
.sheet { padding: 7px 7px 8px; }
.tabs { display: flex; align-items: flex-end; height: 20px; }
.tabs button { height: 18px; padding: 0 5px; margin-left: -1px; border: 1px solid #dcdcdc; border-bottom: 0; line-height: 16px; }
.tabs button:first-child { margin-left: 1px; }
.tabs button:nth-child(2) { padding-right: 13px; }
.tabs .on { height: 21px; margin-bottom: -1px; padding: 0 12px 2px 7px; background: #fff; }
.pane { padding: 9px 12px 14px 13px; border: 1px solid #dcdcdc; background: #fff; }
.list { display: grid; grid-template-columns: 1fr 17px; grid-template-rows: 172px 17px; border: 1px solid #828790; padding: 1px; }
.rows { overflow: hidden; padding-left: 4px; }
table { width: 100%; border-collapse: collapse; table-layout: fixed; }
th, td { height: 17px; padding: 0 0 0 3px; line-height: 17px; font-weight: 400; text-align: left; white-space: nowrap; }
th { height: 24px; padding-bottom: 1px; }
th:first-child { width: 154px; border-right: 1px solid #e5e5e5; }
th:last-child, td:last-child { padding-left: 5px; }
.picked { background: #f5f5f5; }
.vbar, .hbar { background: #f5f5f5; display: flex; align-items: center; }
.vbar { flex-direction: column; }
.vthumb { width: 15px; height: 74px; background: #cdd2ce; margin-bottom: auto; }
.hbar { grid-column: 1 / -1; padding-right: 17px; }
.hthumb { height: 15px; width: 352px; background: #cdd2ce; margin-right: auto; }
.arrow { width: 9px; height: 9px; margin: 4px; fill: none; stroke: #555; stroke-width: 2; }
.pane label { display: block; margin: 3px 0 1px; line-height: 16px; }
.pane input { display: block; width: 100%; height: 23px; padding: 0 5px 3px; border: 1px solid #0078d7; outline: 0; background: #fff; color: #111; }
.pane input::selection { background: #0078d7; color: #fff; }
.btn { width: 73px; height: 21px; border: 1px solid #adadad; background: #e6e6e6; line-height: 17px; }
.btn.ok { border: 2px solid #0078d7; }
.btn:disabled { background: #cdd2ce; border-color: #bfc4c0; color: #888; }
.launch { display: block; margin: 7px 0 0 auto; }
.actions { display: flex; justify-content: flex-end; gap: 8px; padding-top: 8px; }
.vm-taskbar { flex: none; display: flex; height: 40px; background: #03080c; padding-left: 1px; }
.vm-taskbar button { width: 48px; display: flex; align-items: center; justify-content: center; }
.vm-taskbar button:first-child { width: 51px; }
.vm-taskbar .open { background: #3b3e44; border-bottom: 2px solid #76b9ed; }
.vm-tools { flex: none; display: flex; align-items: center; height: 30px; padding: 0 15px 0 4px; background: #2b2d37; font: 15px/24px "Noto Sans", sans-serif; }
.vm-tools button { width: 34px; display: flex; justify-content: center; }
.vm-tools .narrow { width: 26px; }
.vm-name { margin-left: 12px; padding: 0 6px; border-radius: 4px; background: #5f6277; }
.timer { margin-left: auto; }
.chat { position: absolute; right: 20px; bottom: 20px; width: 48px; height: 48px; display: flex; align-items: center; justify-content: center; border-radius: 50%; background: #1c2538; }
.chat svg { width: 26px; height: 24px; }

/* Host taskbar */
.taskbar { flex: none; display: flex; height: 30px; background: linear-gradient(to right, #223a41, #22383f 45%, #1c2c44 75%, #192540); }
.start { width: 36px; display: flex; align-items: center; justify-content: center; }
.search { display: flex; align-items: center; width: 258px; padding-left: 12px; background: #f2f2f2; border: solid #bbb; border-width: 1px 0; }
.search input { flex: 1; padding: 0 0 0 12px; border: 0; background: none; font-size: 14px; color: #333; }
.search input::placeholder { color: #333; opacity: 1; }
.island { width: 60px; height: 28px; }
.apps { display: flex; gap: 1px; }
.apps button { width: 36px; display: flex; align-items: center; justify-content: center; border: solid transparent; border-width: 0 4px 2px; }
.apps .run { border-image: linear-gradient(to right, transparent 4px, #76b9ed 4px, #76b9ed 32px, transparent 32px) 2 4; }
.apps .current { border-image: none; background: #52636c; border-color: #76b9ed; border-width: 0 0 2px; }
.hex { width: 16px; background: #8b84f4; font: 8px/8px "Liberation Sans", sans-serif; color: #2b2495; overflow: hidden; }
.hex b { display: block; background: #1c1230; color: #ed2ddd; font-style: italic; }
.hex small { display: block; font-size: 5px; }
.tray { margin-left: auto; display: flex; align-items: center; gap: 8px; padding-right: 24px; }
.tray svg { fill: none; stroke: #fff; stroke-width: 1.2; }
.tray .haze { width: 25px; height: 22px; stroke: none; }
.weather { font-size: 13px; }
.caret, .note { margin-left: 8px; }
```
